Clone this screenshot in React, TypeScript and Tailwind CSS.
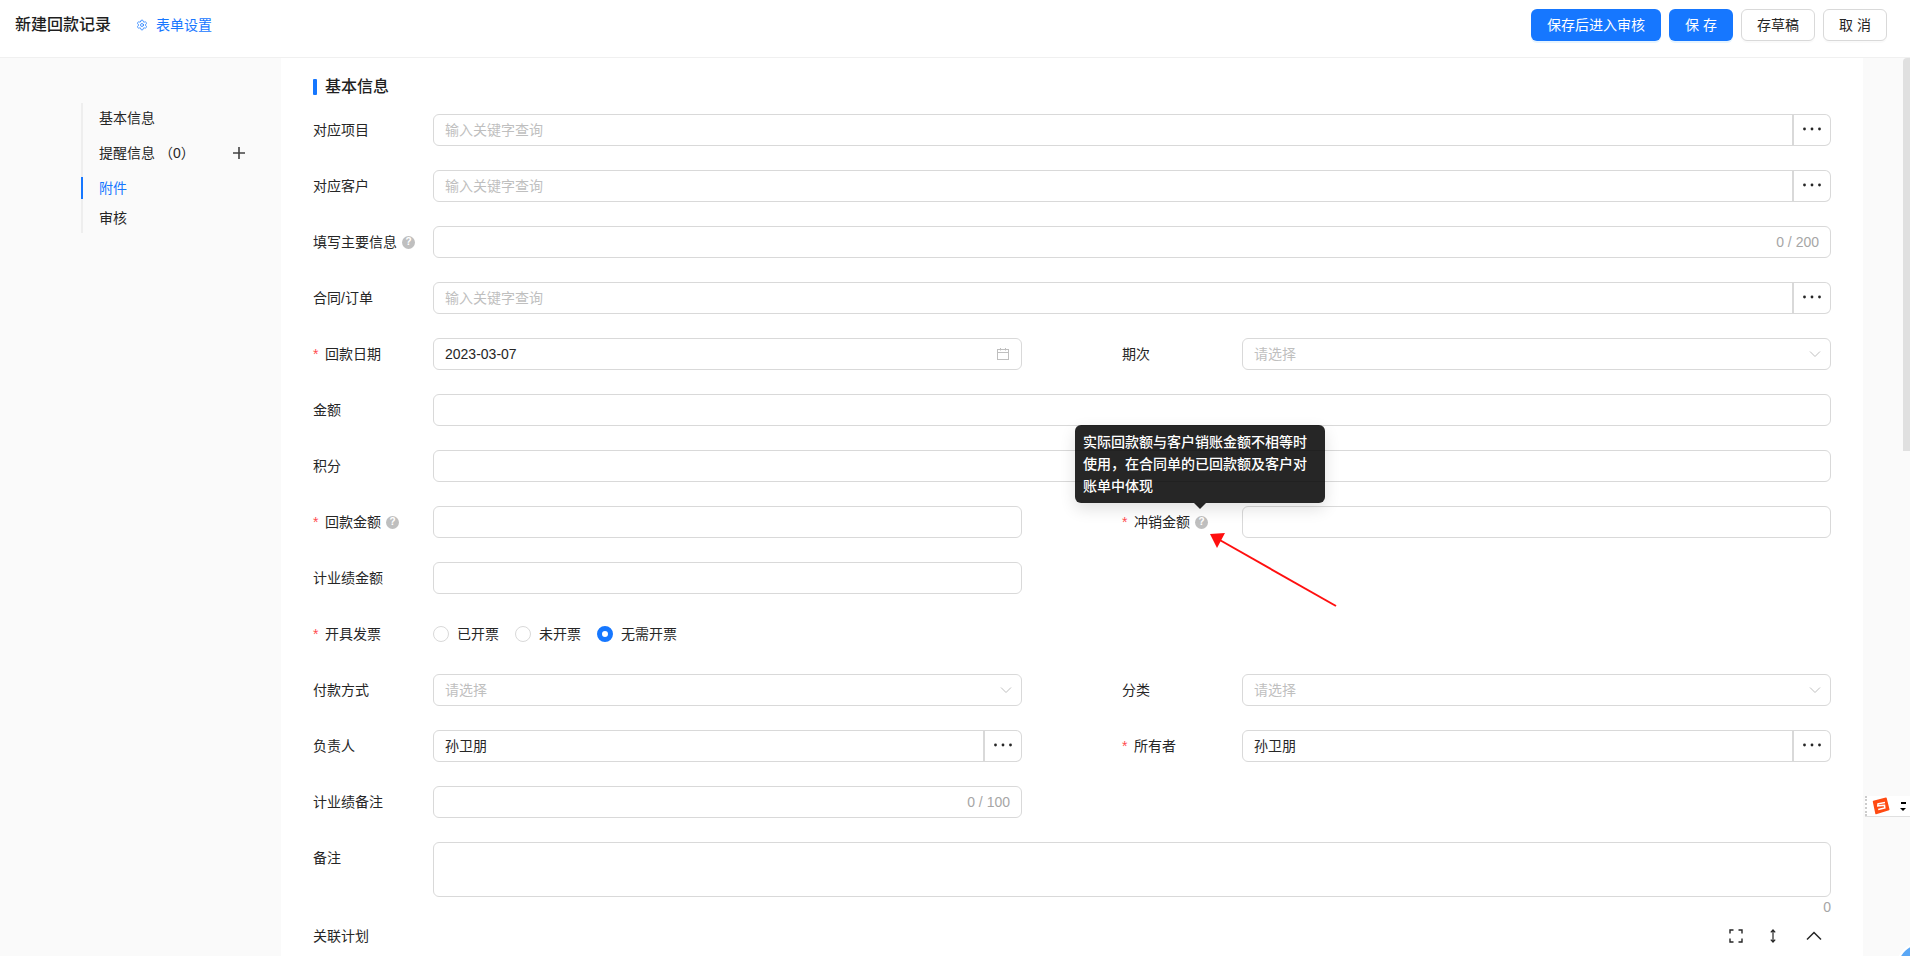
import React from "react";
import { Settings } from "lucide-react";

const font = "font-['Liberation_Sans','Noto_Sans_CJK_SC',sans-serif]";

function Help({ children }: { children?: React.ReactNode }) {
  return (
    <span className="relative ml-[5px] inline-flex h-[13px] w-[13px] items-center justify-center rounded-full bg-[#bfbfbf] text-[10px] leading-none font-bold text-white">
      ?{children}
    </span>
  );
}

function Label({ text, required, help, tip }: { text: string; required?: boolean; help?: boolean; tip?: React.ReactNode }) {
  return (
    <div className="flex h-8 w-[120px] shrink-0 items-center text-[14px] text-[#262626]">
      {required && <span className="mr-[5px] w-[7px] text-[14px] text-[#ff4d4f]">*</span>}
      <span>{text}</span>
      {help && <Help>{tip}</Help>}
    </div>
  );
}

function Dots() {
  return (
    <svg width="20" height="4" viewBox="0 0 20 4" className="mb-[2px]">
      <circle cx="2.5" cy="2" r="1.4" fill="#262626" />
      <circle cx="10" cy="2" r="1.4" fill="#262626" />
      <circle cx="17.5" cy="2" r="1.4" fill="#262626" />
    </svg>
  );
}

function Box({ value, placeholder, right, picker }: { value?: string; placeholder?: string; right?: React.ReactNode; picker?: boolean }) {
  return (
    <div className="flex h-8 min-w-0 flex-1">
      <div
        className={
          picker
            ? "flex min-w-0 flex-1 items-center justify-between rounded-l-[6px] border border-[#d9d9d9] px-[11px] text-[14px] text-[#262626]"
            : "flex min-w-0 flex-1 items-center justify-between rounded-[6px] border border-[#d9d9d9] px-[11px] text-[14px] text-[#262626]"
        }
      >
        {value ? <span>{value}</span> : <span className="text-[#bfbfbf]">{placeholder}</span>}
        {right}
      </div>
      {picker && (
        <div className="ml-[-1px] flex w-[39px] shrink-0 items-center justify-center rounded-r-[6px] border border-l-2 border-[#d9d9d9] bg-white">
          <Dots />
        </div>
      )}
    </div>
  );
}

function Chevron() {
  return (
    <svg width="12" height="12" viewBox="0 0 12 12" fill="none" stroke="#bfbfbf" strokeWidth="1" className="mr-[-2px]">
      <path d="M1 3.5 6 8.5 11 3.5" />
    </svg>
  );
}

function Calendar() {
  return (
    <svg width="14" height="14" viewBox="0 0 14 14" fill="none" stroke="#bfbfbf" strokeWidth="1">
      <rect x="1.5" y="2.5" width="11" height="10" />
      <path d="M1.5 5.5h11M4.5 1v2.5M9.5 1v2.5" />
    </svg>
  );
}

function Count({ text }: { text: string }) {
  return <span className="text-[14px] text-[#a6a6a6]">{text}</span>;
}

function Row({ children }: { children: React.ReactNode }) {
  return <div className="mb-6 flex h-8">{children}</div>;
}

function Half({ children }: { children: React.ReactNode }) {
  return <div className="mb-6 grid h-8 grid-cols-2 gap-x-[100px]">{children}</div>;
}

function Cell({ children }: { children?: React.ReactNode }) {
  return <div className="flex min-w-0">{children}</div>;
}

function Radio({ text, on }: { text: string; on?: boolean }) {
  return (
    <div className="mr-[16px] flex items-center">
      {on ? (
        <span className="h-4 w-4 rounded-full border-[5px] border-[#1677ff] bg-white" />
      ) : (
        <span className="h-4 w-4 rounded-full border border-[#d9d9d9] bg-white" />
      )}
      <span className="ml-[8px] text-[14px] text-[#262626]">{text}</span>
    </div>
  );
}

function Btn({ text, primary, w }: { text: string; primary?: boolean; w: string }) {
  return (
    <div
      className={
        primary
          ? `flex h-8 ${w} items-center justify-center rounded-[6px] bg-[#1677ff] text-[14px] text-white shadow-[0_2px_0_rgba(5,145,255,0.1)]`
          : `flex h-8 ${w} items-center justify-center rounded-[6px] border border-[#d9d9d9] bg-white text-[14px] text-[#262626] shadow-[0_2px_0_rgba(0,0,0,0.02)]`
      }
    >
      {text}
    </div>
  );
}

function NavItem({ text, active, h, extra }: { text: string; active?: boolean; h: string; extra?: React.ReactNode }) {
  return (
    <div
      className={
        active
          ? `ml-[-2px] flex ${h} items-center border-l-2 border-[#1677ff] pl-[16px] text-[14px] text-[#1677ff]`
          : `ml-[-2px] flex ${h} items-center border-l-2 border-transparent pl-[16px] text-[14px] text-[#262626]`
      }
    >
      {text}
      {extra}
    </div>
  );
}

export default function App() {
  return (
    <div className={`relative flex h-[956px] w-[1910px] flex-col overflow-hidden bg-white ${font}`}>
      <header className="flex h-[58px] shrink-0 items-start border-b border-[#f0f0f0] bg-white pt-[9px] pr-[23px] pl-[15px]">
        <div className="h-8 text-[16px] leading-8 font-medium text-[#1f1f1f]">新建回款记录</div>
        <div className="ml-[25px] flex h-8 items-center text-[14px] text-[#1677ff]">
          <Settings size={12} strokeWidth={1.5} color="#1677ff" />
          <span className="ml-[8px]">表单设置</span>
        </div>
        <div className="ml-auto flex gap-2">
          <Btn primary text="保存后进入审核" w="w-[130px]" />
          <Btn primary text="保 存" w="w-[64px]" />
          <Btn text="存草稿" w="w-[74px]" />
          <Btn text="取 消" w="w-[64px]" />
        </div>
      </header>

      <div className="flex min-h-0 flex-1">
        <aside className="w-[281px] shrink-0 bg-[#fafafa] pt-[45px] pl-[81px]">
          <div className="w-[160px] border-l-2 border-[#eeeeee]">
            <NavItem h="h-[30px]" text="基本信息" />
            <NavItem
              h="h-[40px]"
              text="提醒信息 （0）"
              extra={
                <svg width="14" height="14" viewBox="0 0 14 14" className="ml-auto mr-[-5px]" stroke="#434343" strokeWidth="1.6">
                  <path d="M7 1v12M1 7h12" />
                </svg>
              }
            />
            <div className="h-[4px]" />
            <NavItem active h="h-[22px]" text="附件" />
            <NavItem h="h-[34px] pt-[4px]" text="审核" />
          </div>
        </aside>

        <main className="min-w-0 flex-1 px-8 pt-[18px]">
          <div className="flex h-[22px] items-center">
            <span className="h-4 w-[4px] rounded-[1px] bg-[#1677ff]" />
            <span className="ml-[8px] text-[16px] font-medium text-[#1f1f1f]">基本信息</span>
          </div>
          <div className="h-[16px]" />

          <Row>
            <Label text="对应项目" />
            <Box picker placeholder="输入关键字查询" />
          </Row>
          <Row>
            <Label text="对应客户" />
            <Box picker placeholder="输入关键字查询" />
          </Row>
          <Row>
            <Label text="填写主要信息" help />
            <Box right={<Count text="0 / 200" />} />
          </Row>
          <Row>
            <Label text="合同/订单" />
            <Box picker placeholder="输入关键字查询" />
          </Row>
          <Half>
            <Cell>
              <Label required text="回款日期" />
              <Box value="2023-03-07" right={<Calendar />} />
            </Cell>
            <Cell>
              <Label text="期次" />
              <Box placeholder="请选择" right={<Chevron />} />
            </Cell>
          </Half>
          <Row>
            <Label text="金额" />
            <Box />
          </Row>
          <Row>
            <Label text="积分" />
            <Box />
          </Row>
          <Half>
            <Cell>
              <Label required text="回款金额" help />
              <Box />
            </Cell>
            <Cell>
              <Label
                required
                text="冲销金额"
                help
                tip={
                  <span className="absolute bottom-[26px] left-[-120px] z-10 w-[250px] rounded-[6px] bg-[#000000d9] px-[8px] py-[6px] text-left text-[14px] leading-[22px] font-medium text-white shadow-[0_6px_16px_rgba(0,0,0,0.12)]">
                    实际回款额与客户销账金额不相等时使用，在合同单的已回款额及客户对账单中体现
                    <span className="absolute bottom-[-6px] left-[119px] h-0 w-0 border-x-[6px] border-t-[6px] border-x-transparent border-t-[#000000d9]" />
                  </span>
                }
              />
              <Box />
            </Cell>
          </Half>
          <Half>
            <Cell>
              <Label text="计业绩金额" />
              <Box />
            </Cell>
            <Cell />
          </Half>
          <Row>
            <Label required text="开具发票" />
            <div className="flex items-center">
              <Radio text="已开票" />
              <Radio text="未开票" />
              <Radio on text="无需开票" />
            </div>
          </Row>
          <Half>
            <Cell>
              <Label text="付款方式" />
              <Box placeholder="请选择" right={<Chevron />} />
            </Cell>
            <Cell>
              <Label text="分类" />
              <Box placeholder="请选择" right={<Chevron />} />
            </Cell>
          </Half>
          <Half>
            <Cell>
              <Label text="负责人" />
              <Box picker value="孙卫朋" />
            </Cell>
            <Cell>
              <Label required text="所有者" />
              <Box picker value="孙卫朋" />
            </Cell>
          </Half>
          <Half>
            <Cell>
              <Label text="计业绩备注" />
              <Box right={<Count text="0 / 100" />} />
            </Cell>
            <Cell />
          </Half>
          <div className="flex">
            <Label text="备注" />
            <div className="h-[55px] flex-1 rounded-[6px] border border-[#d9d9d9]" />
          </div>
          <div className="h-[30px] text-right text-[14px] leading-[20px] text-[#a6a6a6]">0</div>
          <div className="flex h-[18px] items-center justify-between text-[14px] text-[#262626]">
            <span>关联计划</span>
            <div className="mr-[9px] flex items-center gap-[25px]">
              <svg width="14" height="14" viewBox="0 0 14 14" fill="none" stroke="#262626" strokeWidth="1.4">
                <path d="M1 4.5V1h3.5M9.5 1H13v3.5M13 9.5V13H9.5M4.5 13H1V9.5" />
              </svg>
              <svg width="10" height="14" viewBox="0 0 10 14" fill="none" stroke="#262626" strokeWidth="1.2" className="mr-[3px]">
                <path d="M5 1v12M2.8 3.4 5 1l2.2 2.4M2.8 10.6 5 13l2.2-2.4" />
              </svg>
              <svg width="16" height="10" viewBox="0 0 16 10" fill="none" stroke="#262626" strokeWidth="1.5">
                <path d="M1 8.5 8 1.5l7 7" />
              </svg>
            </div>
          </div>
        </main>

        <div className="w-[47px] shrink-0 bg-[#fafafa]">
          <div className="ml-[40px] h-[393px] w-[7px] rounded-tl-[4px] bg-[#e0e0e0]" />
        </div>
      </div>

      <svg width="1910" height="956" className="pointer-events-none absolute top-0 left-0">
        <path d="M1336 606 1218 539" stroke="#ff0f0f" strokeWidth="2" fill="none" />
        <path d="M1210 534 1225 533 1217 548Z" fill="#ff0f0f" />
      </svg>

      <div className="absolute top-[796px] left-[1865px] flex h-[21px] w-[45px] items-center border-b border-[#e0e0e0] bg-white">
        <span className="h-full w-0 shrink-0 border-l-2 border-dotted border-[#cccccc]" />
        <svg width="18" height="18" viewBox="0 0 18 18" className="ml-[5px] shrink-0">
          <path d="M1.5 4.5 14 1.2 16.8 12.5 4 16.5Z" fill="#ff4a12" stroke="#ff4a12" strokeWidth="1.4" strokeLinejoin="round" />
          <path d="M13 5.5 6 6.8 5.8 8.8 12.5 8.2 12.8 11 6.2 12.4" fill="none" stroke="#ffffff" strokeWidth="1.5" />
        </svg>
        <span className="ml-[10px] flex shrink-0 flex-col items-center">
          <span className="h-[2px] w-[5px] bg-black" />
          <span className="mt-[4px] h-0 w-0 border-x-[3px] border-t-[3px] border-x-transparent border-t-black" />
        </span>
      </div>

      <div className="absolute top-[942px] left-[1896px] h-[52px] w-[52px] rounded-full border-2 border-white bg-[#5aa7f5]" />
    </div>
  );
}
